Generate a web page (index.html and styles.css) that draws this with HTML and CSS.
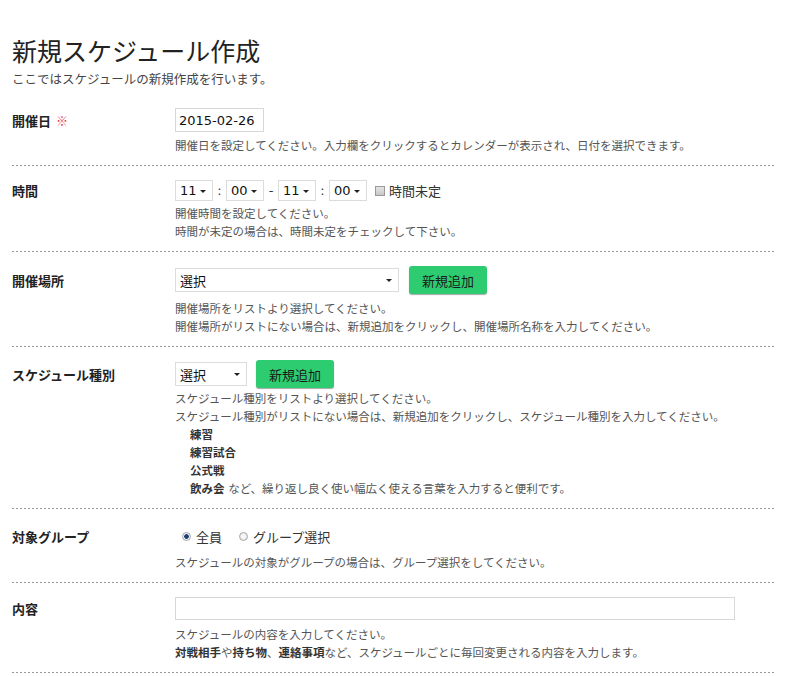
FILE: index.html
```html
<!DOCTYPE html>
<html lang="ja">
<head>
<meta charset="utf-8">
<title>新規スケジュール作成</title>
<link rel="stylesheet" href="styles.css">
</head>
<body>
<div class="page">
  <h1 class="title">新規スケジュール作成</h1>
  <p class="lead">ここではスケジュールの新規作成を行います。</p>

  <div class="form">
    <div class="row row-first">
      <div class="line h24">
        <div class="label-cell">開催日 <span class="req">※</span></div>
        <div class="controls"><div class="textbox date">2015-02-26</div></div>
      </div>
      <p class="help mt5">開催日を設定してください。入力欄をクリックするとカレンダーが表示され、日付を選択できます。</p>
    </div>

    <div class="row">
      <div class="line h21">
        <div class="label-cell">時間</div>
        <div class="controls">
          <div class="select sel-time">11</div>
          <span class="sep">:</span>
          <div class="select sel-time">00</div>
          <span class="sep sep-wide">-</span>
          <div class="select sel-time">11</div>
          <span class="sep">:</span>
          <div class="select sel-time">00</div>
          <span class="check"></span>
          <span class="opt-text">時間未定</span>
        </div>
      </div>
      <p class="help mt4">開催時間を設定してください。<br>時間が未定の場合は、時間未定をチェックして下さい。</p>
    </div>

    <div class="row">
      <div class="line h28">
        <div class="label-cell">開催場所</div>
        <div class="controls">
          <div class="select sel-place">選択</div>
          <button class="btn btn-place" type="button">新規追加</button>
        </div>
      </div>
      <p class="help mt6">開催場所をリストより選択してください。<br>開催場所がリストにない場合は、新規追加をクリックし、開催場所名称を入力してください。</p>
    </div>

    <div class="row row-kind">
      <div class="line h28">
        <div class="label-cell">スケジュール種別</div>
        <div class="controls">
          <div class="select sel-kind">選択</div>
          <button class="btn btn-kind" type="button">新規追加</button>
        </div>
      </div>
      <div class="help mt2">
        スケジュール種別をリストより選択してください。<br>
        スケジュール種別がリストにない場合は、新規追加をクリックし、スケジュール種別を入力してください。
        <ul class="examples">
          <li><b>練習</b></li>
          <li><b>練習試合</b></li>
          <li><b>公式戦</b></li>
          <li><b>飲み会</b> など、繰り返し良く使い幅広く使える言葉を入力すると便利です。</li>
        </ul>
      </div>
    </div>

    <div class="row">
      <div class="line h26">
        <div class="label-cell">対象グループ</div>
        <div class="controls">
          <span class="radio checked"></span><span class="opt-text">全員</span>
          <span class="radio second"></span><span class="opt-text">グループ選択</span>
        </div>
      </div>
      <p class="help mt5">スケジュールの対象がグループの場合は、グループ選択をしてください。</p>
    </div>

    <div class="row">
      <div class="line h23">
        <div class="label-cell">内容</div>
        <div class="controls"><div class="textbox content"></div></div>
      </div>
      <p class="help mt6">スケジュールの内容を入力してください。<br><b>対戦相手</b>や<b>持ち物</b>、<b>連絡事項</b>など、スケジュールごとに毎回変更される内容を入力します。</p>
    </div>
  </div>
</div>
</body>
</html>
```

FILE: styles.css
```css
body {
  margin: 0;
  background: #fff;
  color: #333;
  font-family: "DejaVu Sans", "Noto Sans CJK JP", sans-serif;
}

.page {
  padding: 34px 0 0 12px;
  width: 763px;
}

.title {
  margin: 0;
  font-size: 25px;
  font-weight: normal;
  line-height: 32px;
  color: #222;
  font-family: "Noto Sans CJK JP", sans-serif;
}

.lead {
  margin: 5px 0 0;
  font-size: 12.5px;
  line-height: 18px;
  color: #444;
}

.form {
  margin-top: 19px;
}

.row {
  padding: 14px 0 11px;
  background: repeating-linear-gradient(90deg, #999 0 2px, transparent 2px 4px) left bottom / 100% 1px no-repeat;
}

.row-first {
  padding-top: 0;
}

.row-kind {
  padding-top: 13px;
}

.line {
  display: flex;
  align-items: center;
}

.h21 { height: 21px; }
.h23 { height: 23px; }
.h24 { height: 24px; }
.h26 { height: 26px; }
.h28 { height: 28px; }

.label-cell {
  width: 163px;
  flex: none;
  font-size: 13px;
  font-weight: bold;
  color: #222;
  font-family: "Noto Sans CJK JP", sans-serif;
}

.req {
  color: #e8404a;
  font-weight: normal;
  font-size: 12px;
  margin-left: 2px;
}

.controls {
  display: flex;
  align-items: center;
  height: 100%;
}

.help {
  margin: 0 0 0 163px;
  font-size: 11.5px;
  line-height: 18px;
  color: #555;
  white-space: nowrap;
}

.help b {
  color: #333;
}

.mt2 { margin-top: 2px; }
.mt4 { margin-top: 4px; }
.mt5 { margin-top: 5px; }
.mt6 { margin-top: 6px; }

.examples {
  list-style: none;
  margin: 0;
  padding: 0 0 0 15px;
}

.textbox {
  box-sizing: border-box;
  display: flex;
  align-items: center;
  border: 1px solid #d8d8d8;
  background: #fff;
  font-size: 13px;
  color: #111;
  padding: 0 3px;
}

.date {
  width: 89px;
  height: 24px;
}

.content {
  width: 560px;
  height: 23px;
}

.select {
  position: relative;
  box-sizing: border-box;
  display: flex;
  align-items: center;
  border: 1px solid #dcdcdc;
  background: #fff;
  font-size: 13px;
  color: #111;
  padding-left: 4px;
}

.select::after {
  content: "";
  position: absolute;
  right: 6px;
  top: 50%;
  margin-top: -1px;
  border-left: 3px solid transparent;
  border-right: 3px solid transparent;
  border-top: 3px solid #222;
}

.sel-time {
  width: 38px;
  height: 21px;
}

.sel-place {
  width: 224px;
  height: 24px;
}

.sel-kind {
  width: 72px;
  height: 24px;
}

.sep {
  width: 13px;
  text-align: center;
  font-size: 13px;
  color: #333;
}

.sep-wide {
  width: 14px;
}

.check {
  box-sizing: border-box;
  width: 10px;
  height: 10px;
  margin: 0 4px 0 8px;
  border: 1px solid #9a9a9a;
  background: linear-gradient(#e4e4e4, #c8c8c8);
}

.opt-text {
  font-size: 13px;
  color: #333;
  font-family: "Noto Sans CJK JP", sans-serif;
}

.radio {
  box-sizing: border-box;
  width: 9px;
  height: 9px;
  border-radius: 50%;
  border: 1px solid #a8a8a8;
  background: radial-gradient(circle, #fff 0, #ddd 100%);
  margin: 0 5px 0 7px;
}

.radio.checked {
  background: radial-gradient(circle, #1c3f78 0 2px, #f4f4f4 2.6px, #d8d8d8 100%);
}

.radio.second {
  margin-left: 17px;
}

.btn {
  box-sizing: border-box;
  height: 28px;
  border: none;
  border-radius: 3px;
  background: #2ecc71;
  box-shadow: 0 1px 1px rgba(0, 0, 0, 0.35);
  color: #1a1a1a;
  font-size: 13px;
  font-family: "Noto Sans CJK JP", sans-serif;
  padding: 0;
}

.btn-place {
  width: 78px;
  margin-left: 10px;
}

.btn-kind {
  width: 78px;
  margin-left: 9px;
}
```
